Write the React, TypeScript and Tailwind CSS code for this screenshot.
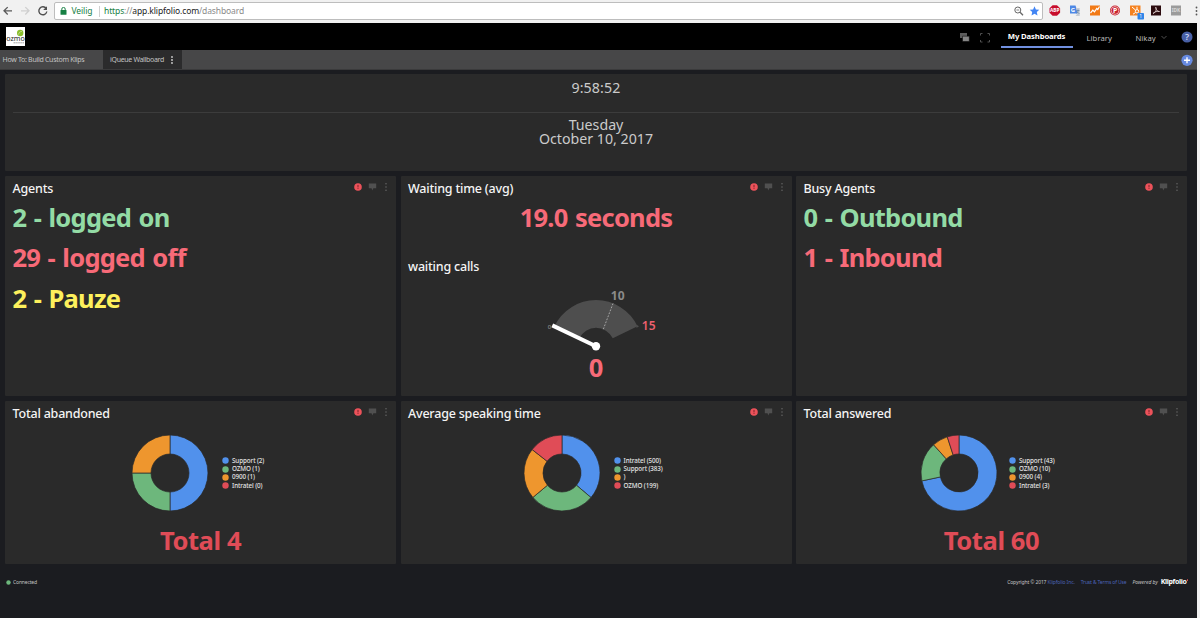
import React from "react";

const BLUE = "#5191ec";
const GREEN = "#6db77c";
const ORANGE = "#ee962e";
const RED = "#e04c57";

type Slice = { label: string; value: number; color: string };

function polar(cx: number, cy: number, r: number, turn: number) {
  const a = turn * Math.PI * 2 - Math.PI / 2;
  return `${(cx + r * Math.cos(a)).toFixed(2)} ${(cy + r * Math.sin(a)).toFixed(2)}`;
}

function Donut({ slices }: { slices: Slice[] }) {
  const total = slices.reduce((sum, s) => sum + s.value, 0);
  let start = 0;
  return (
    <svg width="78" height="78" viewBox="0 0 78 78" className="block shrink-0">
      {slices
        .filter((s) => s.value > 0)
        .map((s) => {
          const end = start + s.value / total;
          const large = end - start > 0.5 ? 1 : 0;
          const d = `M${polar(39, 39, 38, start)}A38 38 0 ${large} 1 ${polar(39, 39, 38, end)}L${polar(39, 39, 19, end)}A19 19 0 ${large} 0 ${polar(39, 39, 19, start)}Z`;
          start = end;
          return <path key={s.label} d={d} fill={s.color} stroke="#2a2a2a" strokeWidth="0.7" />;
        })}
    </svg>
  );
}

function Legend({ slices }: { slices: Slice[] }) {
  return (
    <ul className="flex flex-col pt-[0.5px]">
      {slices.map((s) => (
        <li key={s.label} className="flex h-[8.2px] items-center gap-[3px] text-[6.3px] leading-[8px] font-medium tracking-[-0.1px] whitespace-nowrap text-[#e4e4e4]">
          <svg width="7" height="7" viewBox="0 0 7 7">
            <circle cx="3.5" cy="3.5" r="3.2" fill={s.color} />
          </svg>
          {s.label}
        </li>
      ))}
    </ul>
  );
}

function CardIcons() {
  return (
    <div className="flex h-[11px] items-center">
      <svg width="8" height="8" viewBox="0 0 8 8">
        <circle cx="4" cy="4" r="3.8" fill="#ec525a" />
        <path d="M4 1.9V4.4M4 5.2V6" stroke="#7a2229" strokeWidth="1" />
      </svg>
      <svg width="9" height="8" viewBox="0 0 9 8" className="ml-[6px]">
        <path d="M.8.5H8.2V5.3H5.4L4.2 7.6 3.6 5.3H.8Z" fill="#505050" />
      </svg>
      <svg width="4" height="10" viewBox="0 0 4 10" className="ml-[7px]" fill="#686868">
        <circle cx="2" cy="1.8" r=".75" />
        <circle cx="2" cy="5" r=".75" />
        <circle cx="2" cy="8.2" r=".75" />
      </svg>
    </div>
  );
}

function Card({ title, children }: { title: string; children?: React.ReactNode }) {
  return (
    <section className="min-w-0 rounded-[1px] bg-[#2a2a2a]">
      <header className="flex h-[24px] justify-between pt-[5px] pr-[8px] pl-[7.5px]">
        <h2 className="pt-[0.5px] text-[12.5px] leading-[14px] font-medium tracking-[-0.2px] whitespace-nowrap text-[#f4f4f4]">{title}</h2>
        <CardIcons />
      </header>
      {children}
    </section>
  );
}

function Stat({ className, children }: { className: string; children: React.ReactNode }) {
  return <p className={`text-[25.5px] leading-[40.5px] font-bold tracking-[-0.75px] whitespace-nowrap [word-spacing:1.5px] ${className}`}>{children}</p>;
}

function Gauge() {
  return (
    <svg width="130" height="104" viewBox="0 0 130 104" className="block">
      <path d="M23.5 38.2A46 46 0 0 1 106.5 38.2L81.8 50.3A18.7 18.7 0 0 0 48.2 50.3Z" fill="#4e4e4e" />
      <path d="M105.5 36.8L108 38.2 105.5 40Z" fill="#4e4e4e" />
      <path d="M82 15.5L72.2 41.5" stroke="#b0b0b0" strokeWidth=".9" strokeDasharray="1.8 1.4" />
      <text x="16.8" y="41.2" fontSize="6" fill="#a0a0a0">0</text>
      <path d="M21.3 37.4L65 58.3" stroke="#fff" strokeWidth="4" />
      <circle cx="65" cy="58.3" r="4.2" fill="#fff" />
      <text x="79.800" y="12" fontSize="12" fontWeight="700" fill="#8b8b8b">10</text>
      <text x="110.800" y="42" fontSize="12" fontWeight="600" fill="#f0606f">15</text>
      <text x="65" y="89.300" fontSize="25.5" fontWeight="700" fill="#f76a78" textAnchor="middle">0</text>
    </svg>
  );
}

const abandoned: Slice[] = [
  { label: "Support (2)", value: 2, color: BLUE },
  { label: "OZMO (1)", value: 1, color: GREEN },
  { label: "0900 (1)", value: 1, color: ORANGE },
  { label: "Intratel (0)", value: 0, color: RED },
];
const speaking: Slice[] = [
  { label: "Intratel (500)", value: 500, color: BLUE },
  { label: "Support (383)", value: 383, color: GREEN },
  { label: ")", value: 300, color: ORANGE },
  { label: "OZMO (199)", value: 199, color: RED },
];
const answered: Slice[] = [
  { label: "Support (43)", value: 43, color: BLUE },
  { label: "OZMO (10)", value: 10, color: GREEN },
  { label: "0900 (4)", value: 4, color: ORANGE },
  { label: "Intratel (3)", value: 3, color: RED },
];

function BrowserBar() {
  return (
    <div className="flex h-[23px] items-start bg-[#f1f1f1] pt-[2px]">
      <svg width="54" height="18" viewBox="0 0 54 18" fill="none" strokeWidth="1.3">
        <path d="M12 8.8H4M7.7 5.1L4 8.8 7.7 12.5" stroke="#5a5a5a" />
        <path d="M21 8.8H29M25.3 5.1L29 8.8 25.3 12.5" stroke="#cfcfcf" />
        <path d="M46.2 6.6A4 4 0 1 0 46.8 9.5" stroke="#505050" strokeWidth="1.4" />
        <path d="M47 4.2V8H43.2Z" fill="#505050" />
      </svg>
      <div className="flex h-[18px] w-[989px] items-center rounded-[2px] border border-[#bdbdbd] bg-white">
        <svg width="7" height="8" viewBox="0 0 7 8" className="ml-[5px]">
          <rect x=".5" y="3" width="6" height="4.7" rx=".5" fill="#178044" />
          <path d="M1.8 3.4V2.1a1.7 1.7 0 0 1 3.4 0V3.4" fill="none" stroke="#178044" />
        </svg>
        <span className="ml-[4.5px] w-[22px] text-[8.5px] leading-[12px] tracking-[-0.1px] whitespace-nowrap text-[#178044]">Veilig</span>
        <span className="ml-[5px] h-[11px] w-px bg-[#d0d0d0]" />
        <span className="ml-[4.5px] text-[8.5px] leading-[12px] tracking-[-0.12px] whitespace-nowrap text-[#8a8a8a]">
          <span className="text-[#178044]">https</span>://<span className="text-[#222]">app.klipfolio.com</span>/dashboard
        </span>
        <svg width="26" height="10" viewBox="0 0 26 10" className="mr-[2.5px] ml-auto">
          <circle cx="3.8" cy="4" r="3" fill="none" stroke="#666" />
          <path d="M6.1 6.3L9 9.2" stroke="#666" strokeWidth="1.3" />
          <path d="M2.4 4H5.2" stroke="#666" strokeWidth=".8" />
          <path d="M20.5 .3L21.9 3.5 25.3 3.8 22.8 6.1 23.5 9.5 20.5 7.7 17.5 9.5 18.2 6.1 15.7 3.8 19.1 3.5Z" fill="#4285f4" />
        </svg>
      </div>
      <svg width="157" height="19" viewBox="1043 2 157 19" className="block">
        <path d="M1052.600 5.200h4.400l3.100 3.100v4.400l-3.100 3.100h-4.400l-3.100-3.100V8.300z" fill="#c70d2c" />
        <text x="1054.800" y="12.400" fontSize="4.800" fontWeight="700" fill="#fff" textAnchor="middle">ABP</text>
        <path d="M1070 5.500h5.500l2.500 8h-8z" fill="#4d88e5" />
        <path d="M1076 8h3.700v8h-4.200l2-2.500z" fill="#c5cbd4" />
        <text x="1070.800" y="11.600" fontSize="6" fontWeight="700" fill="#fff">G</text>
        <path d="M1076.500 10.500h3M1078 9.500v1c0 1.500-.5 2-1.500 3M1077 11.500l2.500 2.500" stroke="#55789d" strokeWidth=".6" fill="none" />
        <rect x="1090" y="5.500" width="10" height="10" fill="#f27a16" />
        <path d="M1090.500 13L1092.800 10.200 1094.500 11.800 1096.800 8.500 1097.800 9.500 1099.500 6.500" stroke="#fff" strokeWidth="1.200" fill="none" />
        <circle cx="1115" cy="10.500" r="5" fill="#c9202d" />
        <circle cx="1115" cy="10.500" r="3.900" fill="none" stroke="#f5dfe1" strokeWidth=".7" />
        <text x="1115.100" y="13" fontSize="6.800" fontWeight="700" fill="#fff" textAnchor="middle">P</text>
        <rect x="1130" y="5.500" width="10.500" height="10" fill="#f58220" />
        <circle cx="1137" cy="11.300" r="1.700" stroke="#fff" strokeWidth="1" fill="none" />
        <path d="M1132 7L1135.800 10.300M1137 6.800V9.500M1133 14.200L1135.600 12.500" stroke="#fff" strokeWidth="1" />
        <rect x="1137.500" y="13" width="6.500" height="6.500" rx=".8" fill="#3185e8" />
        <text x="1140.750" y="18" fontSize="5" fill="#fff" textAnchor="middle">1</text>
        <rect x="1151" y="5.500" width="10" height="10" fill="#2b0b0e" />
        <path d="M1153 13.500C1156.500 12 1156.600 9 1155.700 7.200C1156 10 1157.500 11.700 1159.500 11.500C1157.200 11 1154.500 11.800 1153 13.500Z" fill="none" stroke="#e5d5d5" strokeWidth=".8" />
        <rect x="1171" y="5.500" width="10" height="10" fill="#9b9b9b" />
        <text x="1176" y="12.400" fontSize="4.800" fontWeight="700" fill="#d8d8d8" textAnchor="middle">IDK</text>
        <circle cx="1196.500" cy="7.500" r=".9" fill="#555" />
        <circle cx="1196.500" cy="11" r=".9" fill="#555" />
        <circle cx="1196.500" cy="14.500" r=".9" fill="#555" />
      </svg>
    </div>
  );
}

function AppHeader() {
  return (
    <div className="flex h-[27px] shrink-0 bg-black pt-[1px] text-[7.7px] text-[#b9b9b9]">
      <svg width="19" height="19" viewBox="0 0 19 19" className="mt-[3px] ml-[5.5px]">
        <rect width="19" height="19" fill="#fff" />
        <circle cx="14.200" cy="6" r="3.200" fill="#8abf2c" />
        <path d="M12.500 7.500C13 5.500 14 4.500 16 4.300" stroke="#d6eaad" strokeWidth=".7" fill="none" />
        <text x="9.500" y="14" fontSize="7.500" fill="#222" textAnchor="middle" textLength="18.500" lengthAdjust="spacingAndGlyphs">ozmo</text>
        <path d="M7.500 15.800H18" stroke="#777" strokeWidth=".7" strokeDasharray="1.500 .4" />
      </svg>
      <svg width="32" height="12" viewBox="0 0 32 12" className="mt-[7.500px] ml-auto">
        <path d="M0 1H7V6H0Z" fill="#5c5c5c" />
        <path d="M2.500 4.200H9.300V9.500H2.500Z" fill="#858585" stroke="#000" strokeWidth=".5" />
        <path d="M20.500 3.500V1.500H22.500M27.500 1.500H29.500V3.500M29.500 8V10H27.500M22.500 10H20.500V8" fill="none" stroke="#505050" />
      </svg>
      <span className="ml-[9px] flex h-[24px] w-[72px] shrink-0 items-center justify-center border-b-2 border-[#7190e0] pt-[4px] font-bold tracking-[-0.12px] whitespace-nowrap text-white">My Dashboards</span>
      <span className="ml-[14px] w-[27px] pt-[7.500px] leading-[12px] tracking-[0.05px]">Library</span>
      <span className="ml-[22px] w-[22px] pt-[7.500px] leading-[12px]">Nikay</span>
      <svg width="6" height="5" viewBox="0 0 6 5" className="mt-[11px] ml-[3.500px]"><path d="M.5 1L3 3.500 5.500 1" fill="none" stroke="#666" strokeWidth=".8" /></svg>
      <svg width="12" height="12" viewBox="0 0 12 12" className="mt-[6.500px] mr-[4.500px] ml-[13.500px]">
        <circle cx="6" cy="6" r="5.500" fill="#4860a6" />
        <text x="6" y="9.200" fontSize="9" fontWeight="600" fill="#d0d9f6" textAnchor="middle">?</text>
      </svg>
    </div>
  );
}

export default function App() {
  return (
    <div className="h-[618px] w-[1200px] overflow-hidden bg-[#f1f1f1] font-['Noto_Sans','Open_Sans',sans-serif]">
      <BrowserBar />
      <div className="flex h-[595px] w-[1197px] flex-col bg-[#1b1c20]">
        <AppHeader />
        <nav className="flex h-[20px] shrink-0 items-center border-b border-[#3a3a3b] bg-[#474748] text-[7px] text-[#c2c2c2]">
          <span className="w-[103px] pt-[2px] pl-[2.500px] tracking-[-0.29px] whitespace-nowrap">How To: Build Custom Klips</span>
          <span className="flex h-full w-[79px] items-center bg-[#2b2b2c] pl-[7px] whitespace-nowrap">
            <span className="w-[58px] shrink-0 pt-[2px] tracking-[-0.32px]">iQueue Wallboard</span>
            <svg width="4" height="10" viewBox="0 0 4 10" className="mt-[1px] ml-[2px] shrink-0" fill="#d0d0d0">
              <circle cx="2" cy="2" r=".9" />
              <circle cx="2" cy="5" r=".9" />
              <circle cx="2" cy="8" r=".9" />
            </svg>
          </span>
          <svg width="12" height="12" viewBox="0 0 12 12" className="mr-[4.500px] ml-auto">
            <circle cx="6" cy="6.300" r="5.600" fill="#6689df" />
            <path d="M6 3.300V9.300M3 6.300H9" stroke="#fff" strokeWidth="1.400" />
          </svg>
        </nav>

        <main className="flex flex-col gap-[5px] pt-[4px] pr-[10px] pl-[5px]">
          <section className="h-[97px] rounded-[1px] bg-[#2a2a2a] px-[8px] text-center text-[14.200px] leading-[14px] text-[#cbcbcb]">
            <p className="h-[39px] border-b border-[#3c3c3c] pt-[7px] tracking-[0.15px]">9:58:52</p>
            <p className="pt-[5px]">Tuesday</p>
            <p>October 10, 2017</p>
          </section>

          <div className="grid h-[220px] grid-cols-3 gap-[4.500px]">
            <Card title="Agents">
              <div className="-mt-[3.500px] pl-[7.500px]">
                <Stat className="text-[#93dba5]">2 - logged on</Stat>
                <Stat className="text-[#f76a78]">29 - logged off</Stat>
                <Stat className="text-[#fdf05c]">2 - Pauze</Stat>
              </div>
            </Card>
            <Card title="Waiting time (avg)">
              <div className="-mt-[3.500px] text-center">
                <Stat className="text-[#f76a78]">19.0 seconds</Stat>
              </div>
              <h3 className="mt-[22.500px] pl-[7.500px] text-[12.500px] leading-[14px] font-medium tracking-[-0.2px] text-[#f4f4f4]">waiting calls</h3>
              <div className="mt-[14.500px] flex justify-center">
                <Gauge />
              </div>
            </Card>
            <Card title="Busy Agents">
              <div className="-mt-[3.500px] pl-[7.500px]">
                <Stat className="text-[#93dba5]">0 - Outbound</Stat>
                <Stat className="text-[#f76a78]">1 - Inbound</Stat>
              </div>
            </Card>
          </div>

          <div className="grid h-[163px] grid-cols-3 gap-[4.500px]">
            <Card title="Total abandoned">
              <div className="mt-[9px] flex items-center gap-[13px] pl-[126px]">
                <Donut slices={abandoned} />
                <Legend slices={abandoned} />
              </div>
              <p className="mt-[10px] text-center text-[25.500px] leading-[36px] font-bold tracking-[-0.4px] text-[#e04c57]">Total 4</p>
            </Card>
            <Card title="Average speaking time">
              <div className="mt-[9px] flex items-center gap-[12.500px] pl-[122.500px]">
                <Donut slices={speaking} />
                <Legend slices={speaking} />
              </div>
            </Card>
            <Card title="Total answered">
              <div className="mt-[9px] flex items-center gap-[11px] pl-[124px]">
                <Donut slices={answered} />
                <Legend slices={answered} />
              </div>
              <p className="mt-[10px] text-center text-[25.500px] leading-[36px] font-bold tracking-[-0.4px] text-[#e04c57]">Total 60</p>
            </Card>
          </div>
        </main>

        <footer className="mt-[13px] flex h-[10px] items-center pr-[9px] pl-[5.500px] text-[5px] whitespace-nowrap text-[#c4c4c4]">
          <svg width="5" height="5" viewBox="0 0 5 5"><circle cx="2.500" cy="2.500" r="2.200" fill="#6db77c" /></svg>
          <span className="ml-[2.500px] pt-[1px] tracking-[-0.15px]">Connected</span>
          <span className="ml-auto pt-[1px] tracking-[-0.13px]">Copyright © 2017 <span className="text-[#4b63b8]">Klipfolio Inc.</span></span>
          <span className="ml-[6px] pt-[1px] tracking-[-0.15px] text-[#4b63b8]">Trust &amp; Terms of Use</span>
          <span className="ml-[6px] pt-[1px] italic">Powered by</span>
          <span className="ml-[3px] text-[7px] font-bold tracking-[-0.350px] text-white">Klipfolio</span>
          <span className="mb-[4px] h-[1.500px] w-[1.500px] rounded-full bg-[#e04c57]" />
        </footer>
      </div>
    </div>
  );
}
